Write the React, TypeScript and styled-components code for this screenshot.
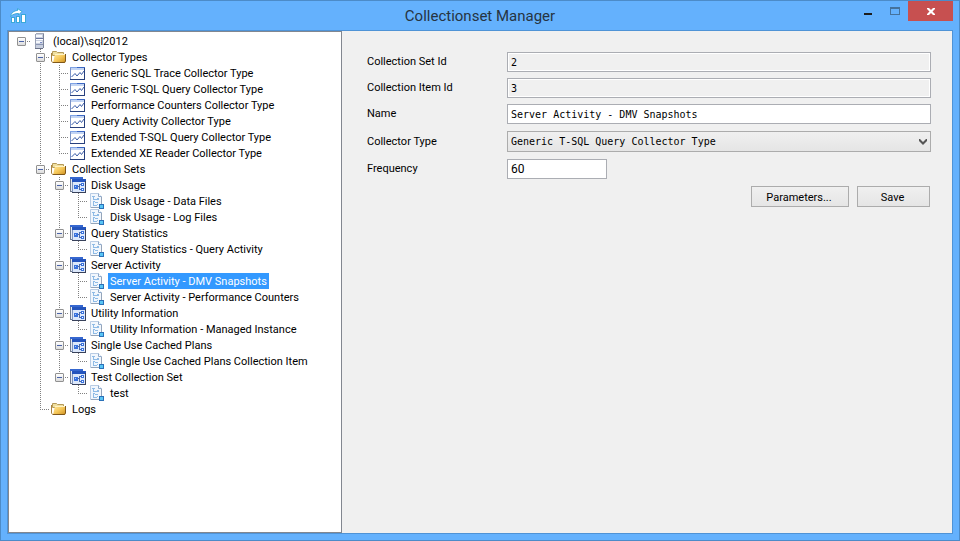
import React, { useState } from "react";
import styled, { createGlobalStyle, css } from "styled-components";

const GlobalStyle = createGlobalStyle`
  *, *::before, *::after { box-sizing: border-box; }
  body {
    margin: 0;
    color: #000;
    font: 11px/16px Roboto, "Liberation Sans", sans-serif;
  }
  button, input, select { font: inherit; color: inherit; margin: 0; border-radius: 0; }
`;

const Frame = styled.div`
  display: flex;
  flex-direction: column;
  min-height: 100vh;
  padding: 0 6px 6px;
  border: 1px solid #4c8bc8;
  background: #64b1fd;
`;

const TitleBar = styled.header`
  display: grid;
  grid-template-columns: 1fr auto 1fr;
  align-items: start;
  height: 29px;
`;

const AppIcon = styled.svg`
  display: block;
  margin: 7px 0 0 3px;
`;

const Title = styled.h1`
  margin: 0;
  color: #263442;
  font: 15px/31px Roboto, "Noto Sans", sans-serif;
`;

const WindowButtons = styled.div`
  display: flex;
  justify-content: flex-end;
`;

const WindowButton = styled.button<{ $close?: boolean }>`
  display: flex;
  align-items: center;
  justify-content: center;
  width: ${(p) => (p.$close ? 45 : 27)}px;
  height: 20px;
  padding: 0;
  border: 0;
  background: ${(p) => (p.$close ? "#c75050" : "transparent")};
`;

const Client = styled.div`
  flex: 1;
  display: grid;
  grid-template-columns: minmax(240px, 334fr) minmax(0, 610fr);
  border: 1px solid #4f93d6;
  background: #f0f0f0;
`;

const TreePanel = styled.nav`
  padding: 1px 3px;
  border: 1px solid #828790;
  background: #fff;
  overflow: hidden;
`;

const Branch = styled.ul`
  margin: 0;
  padding: 0;
  list-style: none;
`;

const Row = styled.div`
  display: flex;
  align-items: center;
  height: 16px;
`;

type GuideKind = "blank" | "pipe" | "tee" | "end" | "root";

const dotsDown = "repeating-linear-gradient(to bottom, #808080 0 1px, transparent 1px 2px)";
const dotsAcross = "repeating-linear-gradient(to right, #808080 0 1px, transparent 1px 2px)";

const guideStyles = {
  blank: css``,
  pipe: css`
    background: ${dotsDown} 9px 0 / 1px 16px no-repeat;
  `,
  tee: css`
    background: ${dotsDown} 9px 0 / 1px 16px no-repeat, ${dotsAcross} 9px 8px / 10px 1px no-repeat;
  `,
  end: css`
    background: ${dotsDown} 9px 0 / 1px 8px no-repeat, ${dotsAcross} 9px 8px / 10px 1px no-repeat;
  `,
  root: css`
    background: ${dotsAcross} 9px 8px / 10px 1px no-repeat;
  `,
};

const Guide = styled.span<{ $kind: GuideKind }>`
  flex: none;
  display: flex;
  width: 19px;
  height: 16px;
  padding: 4px 0 0 5px;
  ${(p) => guideStyles[p.$kind]}
`;

const Expander = styled.button`
  display: block;
  width: 9px;
  height: 9px;
  padding: 0;
  border: 1px solid #919191;
  border-radius: 1px;
  background: linear-gradient(#fff, #dcdcdc);
  line-height: 0;
`;

const NodeIcon = styled.svg`
  flex: none;
  margin: 0 3px 0 1px;
`;

const NodeLabel = styled.button<{ $selected: boolean }>`
  height: 16px;
  padding: 2px 2px 0;
  border: 0;
  background: ${(p) => (p.$selected ? "#3399ff" : "transparent")};
  color: ${(p) => (p.$selected ? "#fff" : "#000")};
  line-height: 14px;
  white-space: nowrap;
`;

const Form = styled.form`
  display: flex;
  flex-direction: column;
  gap: 7px;
  padding: 21px 21px 21px 25px;
`;

const FieldGroup = styled.div`
  display: flex;
  flex-direction: column;
  gap: 6px;
`;

const Field = styled.div`
  display: grid;
  grid-template-columns: 140px minmax(0, 1fr);
  align-items: center;
`;

const FieldLabel = styled.label`
  line-height: 16px;
`;

const TextBox = styled.input<{ $short?: boolean }>`
  width: ${(p) => (p.$short ? "100px" : "100%")};
  height: 20px;
  padding: 0 3px;
  border: 1px solid #abadb3;
  background: #fff;
  font: ${(p) =>
    p.$short ? '12px Roboto, "Liberation Sans", sans-serif' : '10px "DejaVu Sans Mono", monospace'};

  &:read-only {
    background: #f0f0f0;
    box-shadow: inset 0 0 0 1px #fff;
  }
`;

const SelectWrap = styled.div`
  display: grid;
  align-items: center;

  > * {
    grid-area: 1 / 1;
  }
`;

const Select = styled.select`
  appearance: none;
  width: 100%;
  height: 21px;
  padding: 0 20px 0 3px;
  border: 1px solid #acacac;
  background: linear-gradient(#f0f0f0, #e5e5e5);
  font: 10px "DejaVu Sans Mono", monospace;
`;

const Chevron = styled.svg`
  justify-self: end;
  margin-right: 4px;
  pointer-events: none;
`;

const Actions = styled.div`
  display: flex;
  justify-content: flex-end;
  gap: 8px;
  padding-right: 1px;
`;

const PushButton = styled.button<{ $wide?: boolean }>`
  width: ${(p) => (p.$wide ? 98 : 73)}px;
  height: 21px;
  padding: 2px 2px 0 0;
  border: 1px solid #acacac;
  background: linear-gradient(#f0f0f0, #e5e5e5);
`;

type IconName = "server" | "folder" | "chart" | "set" | "item";

const icons: Record<IconName, React.ReactNode> = {
  server: (
    <>
      <path d="M3 1h8v15H3z" fill="#c9d0df" />
      <path d="M11 1h1v14h-1z" fill="#7d8498" />
      <path d="M4 0h8v1H4z" fill="#a3a9b8" />
      <path d="M3 1h1v14H3z" fill="#9aa2b5" />
      <path d="M4 2h6v2H4zM4 8h6v2H4z" fill="#f6f8fc" />
      <path d="M4 5h7v1H4z" fill="#6a76a0" />
      <path d="M4 6h7v1H4z" fill="#fff" />
      <path d="M4 11h7v1H4z" fill="#8c96b4" />
      <path d="M8 9h2v1H8z" fill="#7c8cc4" />
      <path d="M3 15h8v1H3z" fill="#6b7288" />
    </>
  ),
  folder: (
    <>
      <defs>
        <linearGradient id="folderFace" x1="0" y1="0" x2="1" y2="1">
          <stop offset="0" stopColor="#ffeaa0" />
          <stop offset="0.5" stopColor="#f5c657" />
          <stop offset="1" stopColor="#c98b1c" />
        </linearGradient>
      </defs>
      <path d="M1.500 2.500h4l1 1h6v3h-11z" fill="#efdf9f" stroke="#b59a5a" />
      <path d="M0.500 4v8l1 1.500h12.500" fill="none" stroke="#a88240" />
      <path d="M4 5h11v6l-1 3H2z" fill="url(#folderFace)" />
      <path d="M14.500 5V12l-1 1.500H2" fill="none" stroke="#7e571a" />
      <path d="M4 5.500h10" stroke="#fff3c4" />
    </>
  ),
  chart: (
    <>
      <path d="M0 2h15v13H0z" fill="#fff" />
      <path d="M0 2h15v1H0z" fill="#7fa3e6" />
      <path d="M7 2h8v1H7z" fill="#3d68c4" />
      <path d="M0 3h1v12H0z" fill="#7b93c8" />
      <path d="M14 3h1v12h-1zM0 14h15v1H0z" fill="#28407d" />
      <path d="M1 3h13v2H1z" fill="#c3d5f4" />
      <path d="M1.500 12l3.500-3.500 2 2.500 3-3.500 1.500 2L14 6" fill="none" stroke="#3c5ea8" />
    </>
  ),
  set: (
    <>
      <path d="M0 0h13v2H0z" fill="#3667cf" />
      <path d="M0 2h1v12H0z" fill="#707b91" />
      <path d="M1 2h1v12H1z" fill="#e8edf6" />
      <path d="M0 14h3v1H0z" fill="#707b91" />
      <path d="M2 3h14v13H2z" fill="#dce8fb" />
      <path d="M2 2h14v3H2z" fill="#2454bd" />
      <path d="M2 5h1v11H2z" fill="#8196bd" />
      <path d="M15 4h1v12h-1zM2 15h14v1H2z" fill="#38415a" />
      <path d="M4 8h4v4H4z" fill="#3a72dc" />
      <path d="M5 9h1v1H5z" fill="#a9c9ff" />
      <path d="M8 9h2v1H8zM9 7h1v6H9zM10 7h1v1h-1zM10 12h1v1h-1z" fill="#4e6ba8" />
      <path d="M11 6h3v3h-3zM11 11h3v3h-3z" fill="#3a72dc" />
      <path d="M12 7h1v1h-1zM12 12h1v1h-1z" fill="#fff" />
    </>
  ),
  item: (
    <>
      <path d="M1.500 0.500h8l3 3v11h-11z" fill="#f2f7fd" stroke="#b9cce4" />
      <path d="M9.500 0.500v3h3" fill="#fff" stroke="#8fa9c9" />
      <path d="M12 4h1v8h-1zM2 14h9v1H2z" fill="#95a5ba" />
      <path
        d="M3 3h3v1H3zM4 4h1v2H4zM4 6h4v1H4zM8 5h2v2H8zM4 8h2v1H4zM6 9h3v1H6zM4 9h1v3H4zM4 12h4v1H4zM8 11h1v1H8z"
        fill="#8fbbe6"
      />
      <path d="M10 11h5v5h-5z" fill="#2b71b8" />
      <path d="M11 12h3v3h-3z" fill="#59c5f5" />
    </>
  ),
};

type TreeNode = { label: string; icon: IconName; children?: TreeNode[] };

const items = (...labels: string[]): TreeNode[] => labels.map((label) => ({ label, icon: "item" }));

const tree: TreeNode = {
  label: "(local)\\sql2012",
  icon: "server",
  children: [
    {
      label: "Collector Types",
      icon: "folder",
      children: [
        "Generic SQL Trace Collector Type",
        "Generic T-SQL Query Collector Type",
        "Performance Counters Collector Type",
        "Query Activity Collector Type",
        "Extended T-SQL Query Collector Type",
        "Extended XE Reader Collector Type",
      ].map((label) => ({ label, icon: "chart" as const })),
    },
    {
      label: "Collection Sets",
      icon: "folder",
      children: [
        {
          label: "Disk Usage",
          icon: "set",
          children: items("Disk Usage - Data Files", "Disk Usage - Log Files"),
        },
        {
          label: "Query Statistics",
          icon: "set",
          children: items("Query Statistics - Query Activity"),
        },
        {
          label: "Server Activity",
          icon: "set",
          children: items(
            "Server Activity - DMV Snapshots",
            "Server Activity - Performance Counters"
          ),
        },
        {
          label: "Utility Information",
          icon: "set",
          children: items("Utility Information - Managed Instance"),
        },
        {
          label: "Single Use Cached Plans",
          icon: "set",
          children: items("Single Use Cached Plans Collection Item"),
        },
        { label: "Test Collection Set", icon: "set", children: items("test") },
      ],
    },
    { label: "Logs", icon: "folder" },
  ],
};

type TreeItemProps = {
  node: TreeNode;
  trail: GuideKind[];
  kind: GuideKind;
  selected: string;
  onSelect: (label: string) => void;
};

function TreeItem({ node, trail, kind, selected, onSelect }: TreeItemProps) {
  const [open, setOpen] = useState(true);
  const children = node.children ?? [];
  const childTrail: GuideKind[] = [...trail, kind === "tee" ? "pipe" : "blank"];

  return (
    <li
      role="treeitem"
      aria-expanded={children.length ? open : undefined}
      aria-selected={selected === node.label}
    >
      <Row>
        {trail.map((guide, i) => (
          <Guide key={i} $kind={guide} />
        ))}
        <Guide $kind={kind}>
          {children.length > 0 && (
            <Expander
              type="button"
              aria-label={`${open ? "Collapse" : "Expand"} ${node.label}`}
              onClick={() => setOpen(!open)}
            >
              <svg width="7" height="7" viewBox="0 0 7 7" shapeRendering="crispEdges">
                <path d={open ? "M1 3h5v1H1z" : "M1 3h5v1H1zM3 1h1v5H3z"} fill="#4b63a7" />
              </svg>
            </Expander>
          )}
        </Guide>
        <NodeIcon width="16" height="16" viewBox="0 0 16 16" aria-hidden="true">
          {icons[node.icon]}
        </NodeIcon>
        <NodeLabel
          type="button"
          $selected={selected === node.label}
          onClick={() => onSelect(node.label)}
        >
          {node.label}
        </NodeLabel>
      </Row>
      {open && children.length > 0 && (
        <Branch role="group">
          {children.map((child, i) => (
            <TreeItem
              key={child.label}
              node={child}
              trail={childTrail}
              kind={i === children.length - 1 ? "end" : "tee"}
              selected={selected}
              onSelect={onSelect}
            />
          ))}
        </Branch>
      )}
    </li>
  );
}

export default function App() {
  const [selected, setSelected] = useState("Server Activity - DMV Snapshots");

  return (
    <>
      <GlobalStyle />
      <Frame>
        <TitleBar>
          <AppIcon width="16" height="16" viewBox="0 0 16 16" aria-hidden="true">
            <path d="M1 9h4v6H1zM6 8h4v7H6zM11 6h5v9h-5z" fill="#3aa9d8" />
            <path d="M2 10h2v4H2zM7 9h2v5H7zM12 7h3v7h-3z" fill="#fff" />
            <path
              d="M0.500 8.500C1 5 4 2.500 7.500 2.500V0.500L12 3.500 8.500 7V5.500C5 5.500 2.500 6.500 0.500 8.500z"
              fill="#fff"
              stroke="#3aa9d8"
            />
          </AppIcon>
          <Title>Collectionset Manager</Title>
          <WindowButtons>
            <WindowButton type="button" aria-label="Minimize">
              <svg width="10" height="10" viewBox="0 0 10 10">
                <path d="M1 7h8v2H1z" fill="#1c1c1c" />
              </svg>
            </WindowButton>
            <WindowButton type="button" aria-label="Maximize">
              <svg width="10" height="8" viewBox="0 0 10 8">
                <path d="M0 0h10v8H0zM1 2v5h8V2z" fill="#45729c" fillRule="evenodd" />
              </svg>
            </WindowButton>
            <WindowButton type="button" $close aria-label="Close">
              <svg width="8" height="7" viewBox="0 0 8 7">
                <path d="M0 0h2l2 2 2-2h2v1L5.500 3.500 8 6v1H6L4 5 2 7H0V6l2.500-2.500L0 1z" fill="#fff" />
              </svg>
            </WindowButton>
          </WindowButtons>
        </TitleBar>
        <Client>
          <TreePanel aria-label="Collections">
            <Branch role="tree">
              <TreeItem
                node={tree}
                trail={[]}
                kind="root"
                selected={selected}
                onSelect={setSelected}
              />
            </Branch>
          </TreePanel>
          <Form onSubmit={(e) => e.preventDefault()}>
            <FieldGroup>
              <Field>
                <FieldLabel htmlFor="set-id">Collection Set Id</FieldLabel>
                <TextBox id="set-id" readOnly value="2" />
              </Field>
              <Field>
                <FieldLabel htmlFor="item-id">Collection Item Id</FieldLabel>
                <TextBox id="item-id" readOnly value="3" />
              </Field>
              <Field>
                <FieldLabel htmlFor="name">Name</FieldLabel>
                <TextBox id="name" defaultValue="Server Activity - DMV Snapshots" />
              </Field>
            </FieldGroup>
            <Field>
              <FieldLabel htmlFor="collector-type">Collector Type</FieldLabel>
              <SelectWrap>
                <Select id="collector-type" defaultValue="Generic T-SQL Query Collector Type">
                  {tree.children![0].children!.map(({ label }) => (
                    <option key={label}>{label}</option>
                  ))}
                </Select>
                <Chevron width="8" height="6" viewBox="0 0 8 6" aria-hidden="true">
                  <path d="M0 0h1l3 3 3-3h1v2L4 6 0 2z" fill="#555" />
                </Chevron>
              </SelectWrap>
            </Field>
            <Field>
              <FieldLabel htmlFor="frequency">Frequency</FieldLabel>
              <TextBox id="frequency" $short defaultValue="60" />
            </Field>
            <Actions>
              <PushButton type="button" $wide>
                Parameters...
              </PushButton>
              <PushButton type="submit">Save</PushButton>
            </Actions>
          </Form>
        </Client>
      </Frame>
    </>
  );
}
